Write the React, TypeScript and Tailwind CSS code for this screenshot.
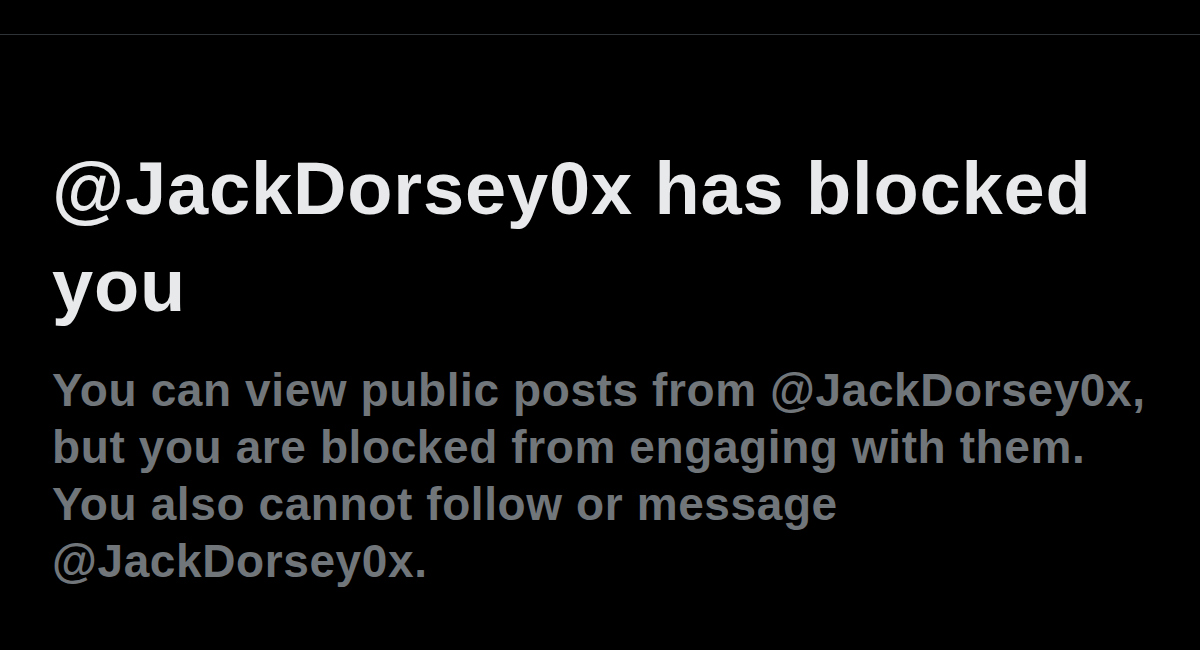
import React from "react";

const handle = "@JackDorsey0x";

const App: React.FC = () => {
  return (
    <div
      className="w-[1200px] h-[650px] bg-black overflow-hidden"
      style={{ fontFamily: '"Liberation Sans", Arial, sans-serif' }}
    >
      <div className="h-[35px] border-b border-[#2f3336]" />
      <div className="pl-[52px] pt-[105px]">
        <h1 className="text-[74px] leading-[97px] font-bold tracking-[0.85px] text-[#e7e9ea] whitespace-nowrap">
          {handle} has blocked
          <br />
          you
        </h1>
        <p className="mt-[28px] text-[46px] leading-[57px] font-bold tracking-[0.6px] text-[#71767b] whitespace-nowrap">
          You can view public posts from {handle},
          <br />
          but you are blocked from engaging with them.
          <br />
          You also cannot follow or message
          <br />
          {handle}.
        </p>
      </div>
    </div>
  );
};

export default App;
